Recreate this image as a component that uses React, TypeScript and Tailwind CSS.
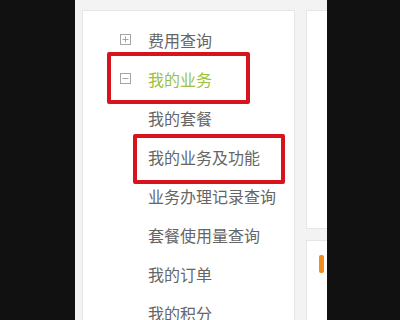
const SUB_ITEMS = ['我的套餐', '我的业务及功能', '业务办理记录查询', '套餐使用量查询', '我的订单', '我的积分']

function BoxIcon({ open }: { open: boolean }) {
  return (
    <svg width="11" height="11" viewBox="0 0 11 11" className="shrink-0">
      <rect x="0.5" y="0.5" width="10" height="10" fill="none" stroke="#a5a5a5" />
      <line x1="2.5" y1="5.5" x2="8.5" y2="5.5" stroke="#a5a5a5" />
      {!open && <line x1="5.5" y1="2.5" x2="5.5" y2="8.5" stroke="#a5a5a5" />}
    </svg>
  )
}

export default function App() {
  return (
    <div
      className="flex h-[320px] w-[400px] overflow-hidden bg-[#111111]"
      style={{ fontFamily: '"Noto Sans CJK SC", "Noto Sans", sans-serif' }}
    >
      {/* left dark strip */}
      <div className="w-[75px] shrink-0 bg-[#111111]" />

      {/* page area */}
      <div className="flex w-[252px] shrink-0 gap-[11px] overflow-hidden bg-[#f3f3f3] pl-[7px] pt-[10px]">
        {/* sidebar menu */}
        <div className="relative h-[340px] w-[213px] shrink-0 border border-[#e6e6e6] bg-white pt-[9px]">
          <div className="flex h-[39px] items-center pl-[37px]">
            <BoxIcon open={false} />
            <span className="ml-[17px] text-[16px] text-[#666666]">费用查询</span>
          </div>
          <div className="flex h-[39px] items-center pl-[37px]">
            <BoxIcon open />
            <span className="ml-[17px] text-[16px] text-[#9cc23a]">我的业务</span>
          </div>
          {SUB_ITEMS.map(item => (
            <div key={item} className="flex h-[39px] items-center pl-[65px]">
              <span className="text-[16px] text-[#666666]">{item}</span>
            </div>
          ))}

          {/* highlight annotations */}
          <div className="absolute left-[24px] top-[41px] h-[52px] w-[143px] rounded-[2px] border-[4px] border-[#d7141c]" />
          <div className="absolute left-[50px] top-[123px] h-[50px] w-[152px] rounded-[2px] border-[4px] border-[#d7141c]" />
        </div>

        {/* right column */}
        <div className="flex w-[60px] shrink-0 flex-col gap-[11px]">
          <div className="h-[219px] shrink-0 border border-[#e6e6e6] bg-white" />
          <div className="h-[100px] shrink-0 border border-[#e6e6e6] bg-white pl-[12px] pt-[14px]">
            <div className="h-[18px] w-[5px] rounded-[2px] bg-[#f28c1e]" />
          </div>
        </div>
      </div>

      {/* right dark strip */}
      <div className="flex-1 bg-[#111111]" />
    </div>
  )
}
